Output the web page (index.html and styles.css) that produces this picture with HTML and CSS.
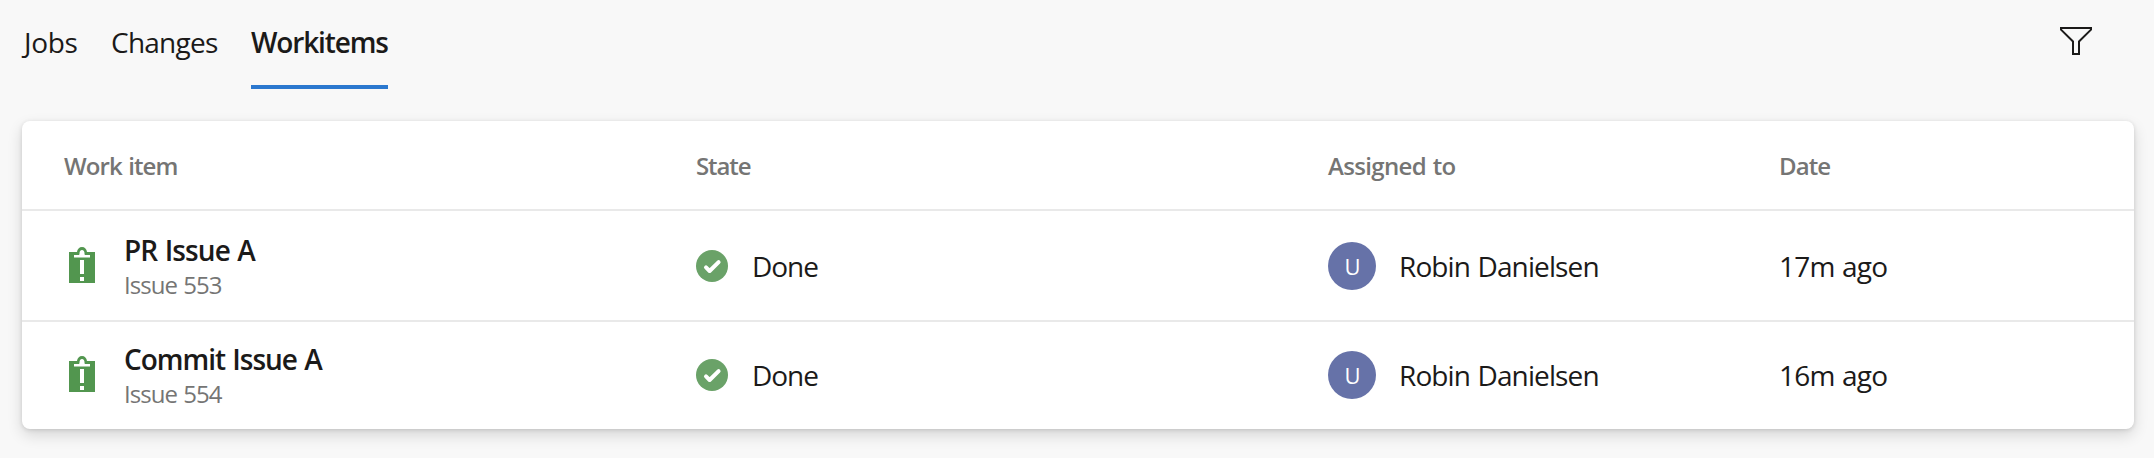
FILE: index.html
```html
<!DOCTYPE html>
<html lang="en">
<head>
<meta charset="utf-8">
<title>Workitems</title>
<link rel="stylesheet" href="styles.css">
</head>
<body>
<svg class="defs" width="0" height="0" aria-hidden="true">
  <symbol id="issue" viewBox="0 0 26 36">
    <path fill="#52964f" d="M0 5h8C8.300 2 10.300 0 13 0s4.700 2 5 5h8v31H0z"/>
    <path fill="#fff" d="M5 8h4.300c1.200 0 1.200-.6 1.200-1.800C10.500 4.300 11.400 3 13 3s2.500 1.300 2.500 3.200c0 1.200 0 1.800 1.200 1.800H21v2.500H5zM11 13h4v14h-4zM11 30h4v4h-4z"/>
  </symbol>
  <symbol id="done" viewBox="0 0 32 32">
    <circle cx="16" cy="16" r="16" fill="#6aa268"/>
    <path d="M10 17.400l3.600 3.600 9-8.900" fill="none" stroke="#fff" stroke-width="4" stroke-linecap="round" stroke-linejoin="round"/>
  </symbol>
</svg>
<header class="topbar">
  <nav class="tabs">
    <a class="tab tab-jobs">Jobs</a>
    <a class="tab tab-changes">Changes</a>
    <a class="tab tab-active">Workitems</a>
  </nav>
  <svg class="filter" width="32" height="28" viewBox="0 0 32 28"><path d="M1 1h30v1.700L19 14.500V27h-6V14.500L1 2.700z" fill="none" stroke="#1b1a19" stroke-width="2"/></svg>
</header>
<main class="card">
  <div class="row head">
    <span class="h-item">Work item</span><span class="h-state">State</span><span class="h-assigned">Assigned to</span><span class="h-date">Date</span>
  </div>
  <div class="row">
    <div class="item"><svg class="issue"><use href="#issue"/></svg><div><div class="title">PR Issue A</div><div class="sub">Issue 553</div></div></div>
    <div class="state"><svg class="done"><use href="#done"/></svg><span>Done</span></div>
    <div class="person"><span class="avatar">U</span><span>Robin Danielsen</span></div>
    <div class="date">17m ago</div>
  </div>
  <div class="row last">
    <div class="item"><svg class="issue"><use href="#issue"/></svg><div><div class="title title-commit">Commit Issue A</div><div class="sub">Issue 554</div></div></div>
    <div class="state"><svg class="done"><use href="#done"/></svg><span>Done</span></div>
    <div class="person"><span class="avatar">U</span><span>Robin Danielsen</span></div>
    <div class="date">16m ago</div>
  </div>
</main>
</body>
</html>
```
FILE: styles.css
```css
* { box-sizing: border-box; }
body {
  margin: 0;
  height: 458px;
  overflow: hidden;
  background: #f8f8f8;
  color: #1b1a19;
  font: 28px/36px "Open Sans", "Noto Sans", sans-serif;
  letter-spacing: -0.8px;
  word-spacing: 1px;
  white-space: nowrap;
}
.defs { position: absolute; }
.topbar {
  display: flex;
  justify-content: space-between;
  height: 121px;
  padding: 0 62px 0 22px;
}
.tabs { display: flex; height: 89px; }
.tab { padding-top: 24px; }
.tab-jobs { width: 89px; padding-left: 2px; letter-spacing: -0.3px; }
.tab-changes { width: 140px; letter-spacing: -0.75px; }
.tab-active {
  width: 137px;
  border-bottom: 4px solid #2b78cf;
  font-weight: 600;
  letter-spacing: -1.15px;
}
.filter { margin-top: 27px; }
.card {
  width: 2112px;
  height: 308px;
  border-radius: 8px;
  margin-left: 22px;
  background: #fff;
  box-shadow: 0 6px 15px rgba(0, 0, 0, .14), 0 1px 4px rgba(0, 0, 0, .12);
}
.row {
  display: grid;
  grid-template-columns: 632px 632px 452px 1fr;
  align-items: center;
  height: 109px;
  padding: 1px 0 0 42px;
}
.last {
  padding: 0 0 1px 42px;
  border-top: 2px solid #e9e9e9;
}
.head {
  height: 90px;
  padding-top: 2px;
  border-bottom: 2px solid #e9e9e9;
  color: #757574;
  font-size: 24px;
  font-weight: 600;
}
.h-item { letter-spacing: -0.9px; }
.h-state { letter-spacing: -1.1px; }
.h-assigned { letter-spacing: -0.65px; }
.h-date { margin-left: -1px; letter-spacing: -0.9px; }
.item, .state, .person { display: flex; align-items: center; }
.issue { width: 26px; height: 36px; margin: -2px 29px 0 5px; }
.title { height: 36px; font-weight: 600; line-height: 37px; letter-spacing: -0.9px; }
.title-commit { letter-spacing: -1.02px; }
.sub { height: 32px; font-size: 24px; line-height: 33px; letter-spacing: -0.95px; color: #757574; }
.done { width: 32px; height: 32px; margin-right: 24px; }
.state { letter-spacing: -1.05px; }
.person { letter-spacing: -0.88px; }
.date { margin-left: -1px; }
.avatar {
  width: 48px;
  height: 48px;
  margin-right: 23px;
  border-radius: 50%;
  background: #6672a8;
  color: #fff;
  font-size: 22px;
  line-height: 48px;
  text-align: center;
}
```
